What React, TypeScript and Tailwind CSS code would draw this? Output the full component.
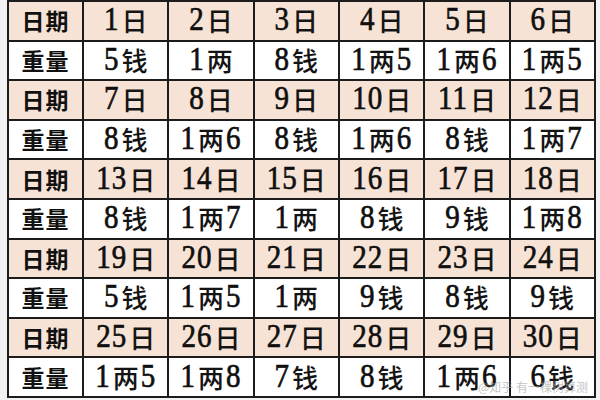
import React from "react";

const rows: { label: string; cells: string[]; date: boolean }[] = [
  { label: "日期", date: true, cells: ["1日", "2日", "3日", "4日", "5日", "6日"] },
  { label: "重量", date: false, cells: ["5钱", "1两", "8钱", "1两5", "1两6", "1两5"] },
  { label: "日期", date: true, cells: ["7日", "8日", "9日", "10日", "11日", "12日"] },
  { label: "重量", date: false, cells: ["8钱", "1两6", "8钱", "1两6", "8钱", "1两7"] },
  { label: "日期", date: true, cells: ["13日", "14日", "15日", "16日", "17日", "18日"] },
  { label: "重量", date: false, cells: ["8钱", "1两7", "1两", "8钱", "9钱", "1两8"] },
  { label: "日期", date: true, cells: ["19日", "20日", "21日", "22日", "23日", "24日"] },
  { label: "重量", date: false, cells: ["5钱", "1两5", "1两", "9钱", "8钱", "9钱"] },
  { label: "日期", date: true, cells: ["25日", "26日", "27日", "28日", "29日", "30日"] },
  { label: "重量", date: false, cells: ["1两5", "1两8", "7钱", "8钱", "1两6", "6钱"] },
];

function Cell({ text }: { text: string }) {
  const parts = text.split(/(\d+)/).filter((p) => p.length > 0);
  return (
    <span className="inline-flex items-baseline">
      {parts.map((p, i) =>
        /\d/.test(p) ? (
          <span
            key={i}
            className="mx-[1px] inline-block origin-bottom scale-y-[1.15] text-[29px] leading-none tracking-[1px] text-[#0f0f0f] [-webkit-text-stroke:0.6px_#0f0f0f]"
            style={{ fontFamily: '"Liberation Serif", serif' }}
          >
            {p}
          </span>
        ) : (
          <span
            key={i}
            className="mx-[1px] text-[26px] font-medium leading-none text-[#141414]"
            style={{ fontFamily: '"Noto Sans CJK SC", sans-serif' }}
          >
            {p}
          </span>
        )
      )}
    </span>
  );
}

export default function App() {
  return (
    <div className="relative h-[400px] w-[600px] overflow-hidden bg-[#f2f2f2] pl-[7px]">
      <div className="grid w-[589px] grid-cols-[73px_repeat(6,1fr)] gap-[2px] bg-[#1c1c1c] p-[2px]">
        {rows.map((r, ri) => (
          <React.Fragment key={ri}>
            <div
              className={`flex h-[37.6px] items-center justify-center ${
                r.date ? "bg-[#f6e3d5]" : "bg-white"
              }`}
            >
              <span
                className="text-[23px] font-bold leading-none tracking-[1px] text-[#111]"
                style={{ fontFamily: '"Noto Sans CJK SC", sans-serif' }}
              >
                {r.label}
              </span>
            </div>
            {r.cells.map((c, ci) => (
              <div
                key={ci}
                className={`flex h-[37.6px] items-center justify-center pt-[2px] ${
                  r.date ? "bg-[#f6e3d5]" : "bg-white"
                }`}
              >
                <Cell text={c} />
              </div>
            ))}
          </React.Fragment>
        ))}
      </div>
      <div
        className="absolute bottom-[4px] right-[12px] text-[12px] text-[#a0a0a0] opacity-60"
        style={{ fontFamily: '"Noto Sans CJK SC", sans-serif' }}
      >
        @知乎 有一棵树算测
      </div>
    </div>
  );
}
